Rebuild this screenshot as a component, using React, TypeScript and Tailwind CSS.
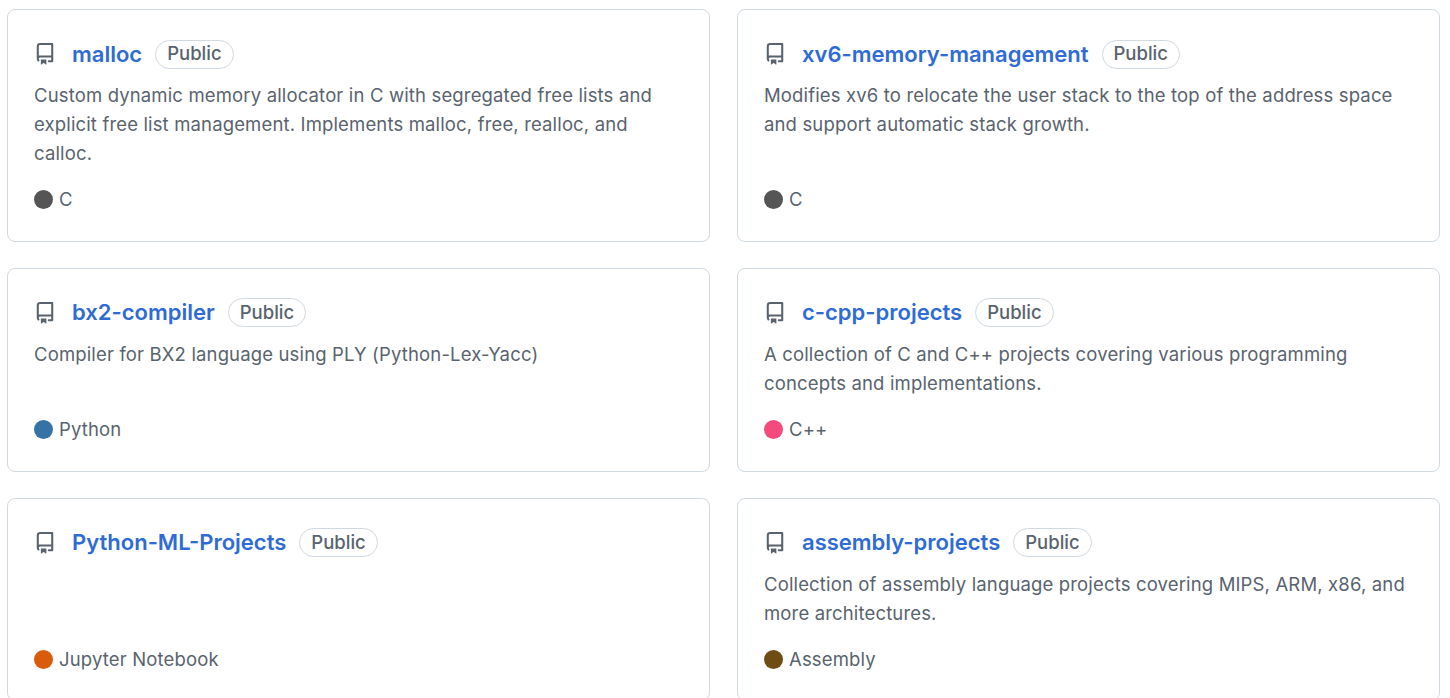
import React from "react";

type Repo = { name: string; desc?: string; lang: string; color: string };
const repos: Repo[] = [
  { name: "malloc", desc: "Custom dynamic memory allocator in C with segregated free lists and explicit free list management. Implements malloc, free, realloc, and calloc.", lang: "C", color: "#555555" },
  { name: "xv6-memory-management", desc: "Modifies xv6 to relocate the user stack to the top of the address space and support automatic stack growth.", lang: "C", color: "#555555" },
  { name: "bx2-compiler", desc: "Compiler for BX2 language using PLY (Python-Lex-Yacc)", lang: "Python", color: "#3572A5" },
  { name: "c-cpp-projects", desc: "A collection of C and C++ projects covering various programming concepts and implementations.", lang: "C++", color: "#f34b7d" },
  { name: "Python-ML-Projects", lang: "Jupyter Notebook", color: "#DA5B0B" },
  { name: "assembly-projects", desc: "Collection of assembly language projects covering MIPS, ARM, x86, and more architectures.", lang: "Assembly", color: "#6E4C13" },
];

function RepoIcon() {
  return (
    <svg width="22" height="22" viewBox="0 0 16 16" fill="#59636e">
      <path d="M2 2.5A2.5 2.5 0 0 1 4.5 0h8.75a.75.75 0 0 1 .75.75v12.5a.75.75 0 0 1-.75.75h-2.5a.75.75 0 0 1 0-1.5h1.75v-2h-8a1 1 0 0 0-.714 1.7.75.75 0 1 1-1.072 1.05A2.495 2.495 0 0 1 2 11.5Zm10.5-1h-8a1 1 0 0 0-1 1v6.708A2.486 2.486 0 0 1 4.5 9h8ZM5 12.25a.25.25 0 0 1 .25-.25h3.5a.25.25 0 0 1 .25.25v3.25a.25.25 0 0 1-.4.2l-1.45-1.087a.249.249 0 0 0-.3 0L5.4 15.7a.25.25 0 0 1-.4-.2Z" />
    </svg>
  );
}

export default function App() {
  return (
    <div className="w-[1450px] h-[698px] bg-white pt-[9px] pl-[7px] pr-[10px]" style={{ fontFamily: "Inter, 'Liberation Sans', sans-serif" }}>
      <div className="grid grid-cols-2 gap-x-[27px] gap-y-[26px]">
        {repos.map((r) => (
          <div key={r.name} className="border border-[#d1d9e0] rounded-[8px] px-[26px] pt-[29px] pb-[27px] flex flex-col min-h-[198px]">
            <div className="flex items-center h-[30px]">
              <RepoIcon />
              <span className="ml-[16px] text-[22px] font-semibold text-[#2f6bd4]">{r.name}</span>
              <span className="ml-[13px] border border-[#d1d9e0] rounded-full px-[11px] h-[29px] flex items-center text-[18.5px] text-[#59636e] font-medium">Public</span>
            </div>
            <p className="mt-[12px] text-[18.5px] tracking-[0.15px] leading-[29px] text-[#59636e] min-h-[58px] pr-[8px]">{r.desc}</p>
            <div className="mt-auto pt-[18px] flex items-center text-[18.5px] tracking-[0.15px] text-[#59636e]">
              <span className="w-[19px] h-[19px] rounded-full mr-[6px]" style={{ background: r.color }} />
              {r.lang}
            </div>
          </div>
        ))}
      </div>
    </div>
  );
}
